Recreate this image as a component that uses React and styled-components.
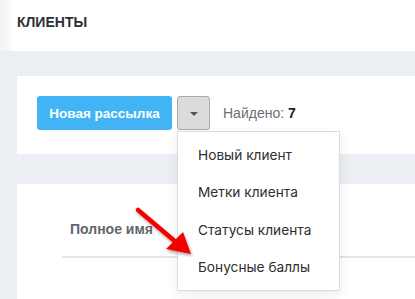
import React from "react";
import styled, { createGlobalStyle } from "styled-components";

const GlobalStyle = createGlobalStyle`
  body {
    margin: 0;
    font-family: "Liberation Sans", Arial, sans-serif;
    background: #ebeef3;
  }
`;

const menuItems = [
  "Новый клиент",
  "Метки клиента",
  "Статусы клиента",
  "Бонусные баллы",
];

const App = () => {
  return (
    <>
      <GlobalStyle />
      <Page>
        <Header>
          <Title>КЛИЕНТЫ</Title>
        </Header>
        <Content>
          <Card>
            <Toolbar>
              <PrimaryBtn>Новая рассылка</PrimaryBtn>
              <ToggleWrap>
                <ToggleBtn>
                  <Caret />
                </ToggleBtn>
                <Menu>
                  {menuItems.map((item, idx) => (
                    <MenuItem key={idx}>{item}</MenuItem>
                  ))}
                </Menu>
              </ToggleWrap>
              <Found>
                Найдено: <b>7</b>
              </Found>
            </Toolbar>
          </Card>
          <TableCard>
            <HeadRow>
              <HeadCell>Полное имя</HeadCell>
            </HeadRow>
          </TableCard>
        </Content>
        <Arrow viewBox="0 0 70 60" width="70" height="60">
          <defs>
            <filter id="sh" x="-30%" y="-30%" width="160%" height="160%">
              <feDropShadow dx="1" dy="2" stdDeviation="1.5" floodColor="#000" floodOpacity="0.35" />
            </filter>
          </defs>
          <g filter="url(#sh)">
            <line x1="7" y1="5" x2="46" y2="38" stroke="#f50000" strokeWidth="4.5" strokeLinecap="round" />
            <polygon points="60,49 35,44 52,27" fill="#f50000" />
          </g>
        </Arrow>
      </Page>
    </>
  );
};
export default App;

const Page = styled.div`
  position: relative;
  width: 415px;
  height: 299px;
  overflow: hidden;
  background: #ebeef3;
`;

const Header = styled.div`
  height: 51px;
  box-sizing: border-box;
  display: flex;
  align-items: flex-start;
  padding: 14px 0 0 17px;
  background: linear-gradient(to right, #f3f3f3 0px, #fafafa 10px, #ffffff 14px);
`;

const Title = styled.h1`
  margin: 0;
  font-family: "Liberation Sans", Arial, sans-serif;
  font-weight: 700;
  font-size: 14px;
  line-height: 16px;
  color: #2c2f36;
`;

const Content = styled.div`
  padding: 25px 0 0 17px;
  display: flex;
  flex-direction: column;
  gap: 30px;
`;

const Card = styled.div`
  background: #fff;
  height: 78px;
  padding: 20px 0 0 20px;
  box-sizing: border-box;
`;

const Toolbar = styled.div`
  display: flex;
  align-items: center;
`;

const PrimaryBtn = styled.button`
  width: 135px;
  height: 34px;
  border: none;
  border-radius: 3px;
  background: #42b4f6;
  color: #fff;
  font-family: "Liberation Sans", Arial, sans-serif;
  font-weight: 700;
  font-size: 13.5px;
  padding: 0;
`;

const ToggleWrap = styled.div`
  position: relative;
  margin-left: 5px;
`;

const ToggleBtn = styled.div`
  width: 33px;
  height: 34px;
  box-sizing: border-box;
  border: 1px solid #a9a9a9;
  border-radius: 3px;
  background: #dcdcdc;
  display: flex;
  align-items: center;
  justify-content: center;
`;

const Caret = styled.span`
  width: 0;
  height: 0;
  margin-top: 1px;
  border-left: 4px solid transparent;
  border-right: 4px solid transparent;
  border-top: 4px solid #555;
`;

const Menu = styled.div`
  position: absolute;
  top: 35px;
  left: 0;
  width: 163px;
  box-sizing: border-box;
  background: #fff;
  border: 1px solid #dcdcdc;
  box-shadow: 0 4px 12px rgba(0, 0, 0, 0.08);
  padding: 4px 0;
  z-index: 2;
`;

const MenuItem = styled.div`
  height: 37.5px;
  display: flex;
  align-items: center;
  padding-left: 20px;
  font-family: Inter, "Noto Sans", sans-serif;
  font-size: 13.7px;
  color: #2f2f2f;
`;

const Found = styled.span`
  margin-left: 13px;
  font-size: 14px;
  color: #6b6f76;
  b {
    color: #222;
  }
`;

const TableCard = styled.div`
  background: #fff;
  height: 140px;
  padding: 25px 0 0 45px;
  box-sizing: border-box;
`;

const HeadRow = styled.div`
  border-bottom: 2px solid #e4e4e4;
  height: 49px;
  box-sizing: border-box;
  padding-bottom: 7px;
  display: flex;
  align-items: center;
`;

const HeadCell = styled.div`
  padding-left: 8px;
  font-family: "Liberation Sans", Arial, sans-serif;
  font-weight: 700;
  font-size: 14px;
  color: #61656e;
`;

const Arrow = styled.svg`
  position: absolute;
  left: 131px;
  top: 205px;
  z-index: 3;
`;
